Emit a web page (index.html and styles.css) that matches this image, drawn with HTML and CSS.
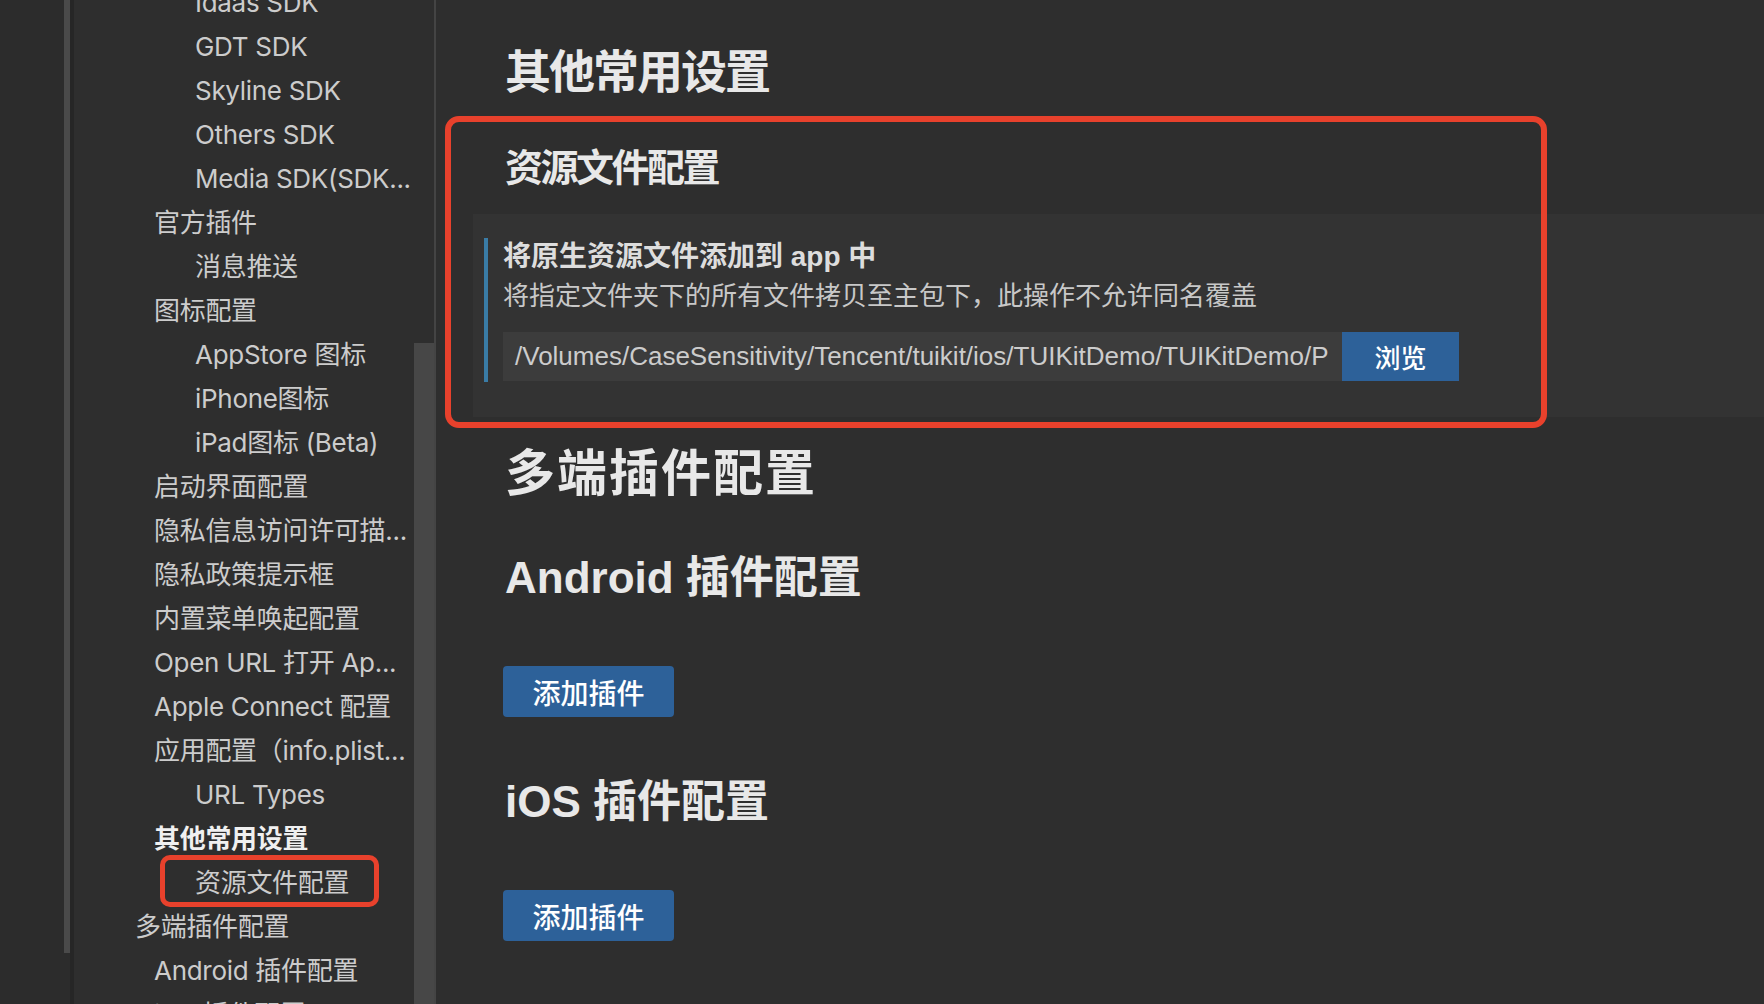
FILE: index.html
```html
<!DOCTYPE html>
<html lang="zh-CN">
<head>
  <meta charset="UTF-8">
  <meta name="viewport" content="width=device-width, initial-scale=1.0">
  <title>其他常用设置</title>
  <link rel="stylesheet" href="styles.css">
</head>
<body>
  <div class="app">
    <div class="outline-pane"></div>
    <div class="outline-scroll"><div class="thumb"></div></div>
    <div class="outline-divider"></div>

    <nav class="sidebar">
      <ul class="nav">
        <li class="level-2">Idaas SDK</li>
        <li class="level-2">GDT SDK</li>
        <li class="level-2">Skyline SDK</li>
        <li class="level-2">Others SDK</li>
        <li class="level-2">Media SDK(SDK...</li>
        <li class="level-1">官方插件</li>
        <li class="level-2">消息推送</li>
        <li class="level-1">图标配置</li>
        <li class="level-2">AppStore 图标</li>
        <li class="level-2">iPhone图标</li>
        <li class="level-2">iPad图标 (Beta)</li>
        <li class="level-1">启动界面配置</li>
        <li class="level-1">隐私信息访问许可描...</li>
        <li class="level-1">隐私政策提示框</li>
        <li class="level-1">内置菜单唤起配置</li>
        <li class="level-1">Open URL 打开 Ap...</li>
        <li class="level-1">Apple Connect 配置</li>
        <li class="level-1">应用配置（info.plist...</li>
        <li class="level-2">URL Types</li>
        <li class="level-1 active">其他常用设置</li>
        <li class="level-2 marked">资源文件配置</li>
        <li class="level-0">多端插件配置</li>
        <li class="level-1">Android 插件配置</li>
        <li class="level-1">iOS 插件配置</li>
      </ul>
    </nav>
    <div class="sidebar-scroll"><div class="thumb"></div></div>
    <div class="sidebar-border"></div>

    <main class="main">
      <h1 class="page-title">其他常用设置</h1>
      <h2 class="section-title">资源文件配置</h2>

      <div class="panel">
        <div class="field">
          <div class="field-title">将原生资源文件添加到 app 中</div>
          <div class="field-desc">将指定文件夹下的所有文件拷贝至主包下，此操作不允许同名覆盖</div>
          <div class="path-row">
            <div class="path-input">/Volumes/CaseSensitivity/Tencent/tuikit/ios/TUIKitDemo/TUIKitDemo/P</div>
            <button class="browse-btn">浏览</button>
          </div>
        </div>
      </div>

      <h1 class="page-title big">多端插件配置</h1>

      <h2 class="plugin-title">Android 插件配置</h2>
      <button class="btn">添加插件</button>

      <h2 class="plugin-title">iOS 插件配置</h2>
      <button class="btn">添加插件</button>

      <div class="highlight-box"></div>
    </main>
  </div>
</body>
</html>
```

FILE: styles.css
```css
:root {
  --bg: #2e2e2e;
  --panel: #333333;
  --input: #3c3c3c;
  --text: #cccccc;
  --heading: #e8e8e8;
  --blue: #2d6199;
  --accent: #3a7ca6;
  --mark: #e8412c;
}

html, body {
  margin: 0;
  height: 100%;
  overflow: hidden;
  background-color: var(--bg);
}

.app {
  display: flex;
  height: 1004px;
  font-family: Inter, "Noto Sans CJK SC", sans-serif;
}

.outline-pane {
  width: 64px;
  background-color: #2c2c2c;
}

.outline-scroll {
  width: 6px;
  background-color: #2c2c2c;
}

.outline-scroll .thumb {
  height: 953px;
  background-color: #4a4a4a;
}

.outline-divider {
  width: 4px;
  background-color: #262626;
}

/* sidebar tree */
.sidebar {
  width: 340px;
  overflow: hidden;
}

.nav {
  list-style: none;
  margin: -19px 0 0;
  padding: 0;
}

.nav li {
  font-size: 26px;
  line-height: 44px;
  height: 44px;
  letter-spacing: -0.3px;
  color: var(--text);
  white-space: nowrap;
  overflow: hidden;
  text-overflow: ellipsis;
  padding-right: 2px;
}

.nav .level-0 { padding-left: 61px; }
.nav .level-1 { padding-left: 80px; }
.nav .level-2 { padding-left: 121px; }

.nav .active {
  font-weight: 700;
  color: #f0f0f0;
}

.nav .marked {
  position: relative;
  overflow: visible;
}

.nav .marked::after {
  content: "";
  position: absolute;
  left: 86px;
  top: -6px;
  width: 209px;
  height: 42px;
  border: 5px solid var(--mark);
  border-radius: 10px;
}

.sidebar-scroll {
  width: 20px;
  display: flex;
  flex-direction: column;
  justify-content: flex-end;
}

.sidebar-scroll .thumb {
  height: 661px;
  background-color: #474747;
}

.sidebar-border {
  width: 2px;
  background-color: #444444;
}

/* main content */
.main {
  flex: 1;
  position: relative;
  padding-top: 42px;
  font-family: "Liberation Sans", "Noto Sans CJK SC", sans-serif;
  color: var(--heading);
}

.page-title {
  margin: 0 0 0 69px;
  font-size: 46px;
  line-height: 60px;
  font-weight: 700;
  letter-spacing: -2px;
}

.page-title.big {
  margin-top: 27px;
  font-size: 50px;
  letter-spacing: 2px;
}

.section-title {
  margin: 41px 0 0 69px;
  font-size: 38px;
  line-height: 50px;
  font-weight: 700;
  letter-spacing: -2.5px;
}

.panel {
  margin: 21px 0 0 37px;
  padding: 24px 0 35px 11px;
  background-color: var(--panel);
}

.field {
  border-left: 4px solid var(--accent);
  padding-left: 15px;
  padding-bottom: 1px;
}

.field-title {
  padding-top: 2px;
  font-size: 28px;
  line-height: 34px;
  font-weight: 700;
  color: #dddddd;
}

.field-desc {
  margin-top: 2px;
  font-size: 26px;
  line-height: 40px;
  color: #c8c8c8;
}

.path-row {
  display: flex;
  margin-top: 16px;
  height: 49px;
}

.path-input {
  width: 827px;
  padding-left: 12px;
  background-color: var(--input);
  color: #cccccc;
  font-size: 26px;
  line-height: 49px;
  white-space: nowrap;
  overflow: hidden;
}

.browse-btn {
  width: 117px;
  border: none;
  background-color: var(--blue);
  color: #ffffff;
  font-family: "Noto Sans CJK SC", sans-serif;
  font-size: 26px;
  font-weight: 500;
  padding: 0;
}

.plugin-title {
  margin: 49px 0 0 69px;
  font-size: 44px;
  line-height: 50px;
  font-weight: 700;
}

.btn {
  display: block;
  margin: 63px 0 0 67px;
  width: 171px;
  height: 51px;
  border: none;
  border-radius: 4px;
  background-color: var(--blue);
  color: #ffffff;
  font-family: "Noto Sans CJK SC", sans-serif;
  font-size: 28px;
  font-weight: 500;
  padding: 0;
}

.btn + .plugin-title {
  margin-top: 60px;
}

/* annotation overlay */
.highlight-box {
  position: absolute;
  left: 9px;
  top: 116px;
  width: 1090px;
  height: 300px;
  border: 6px solid var(--mark);
  border-radius: 14px;
  pointer-events: none;
}
```
